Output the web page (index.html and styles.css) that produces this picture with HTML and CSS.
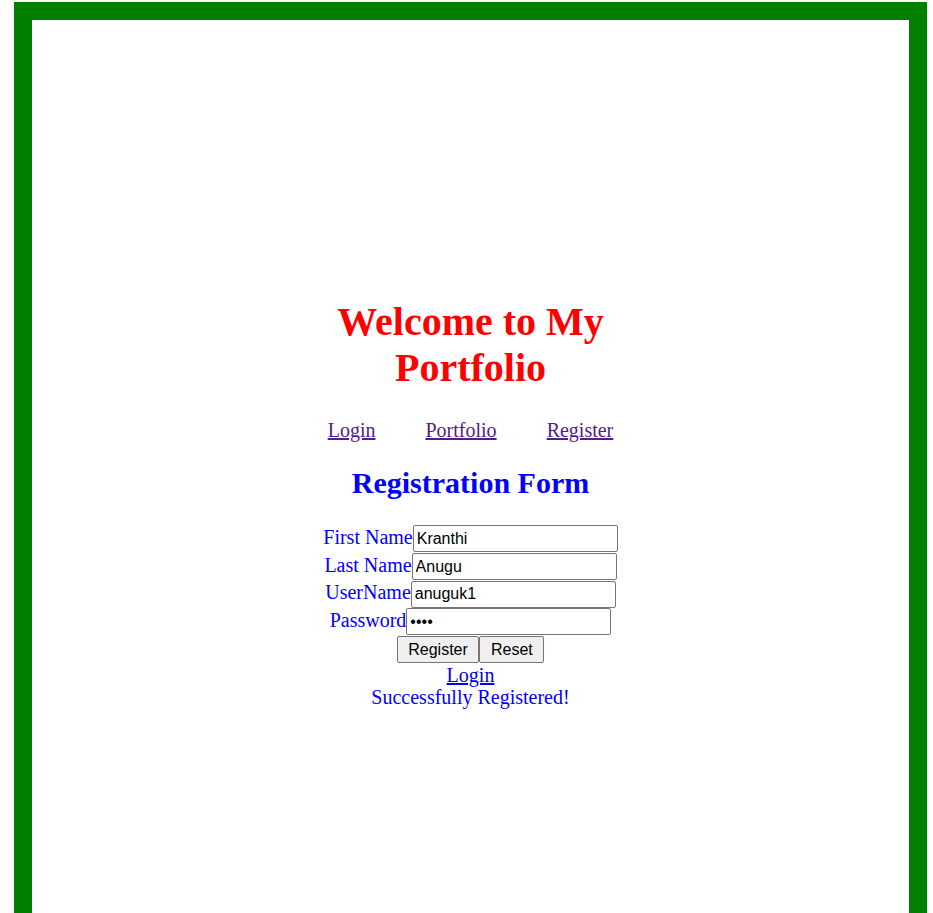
FILE: index.html
```html
<!DOCTYPE html>
<html lang="en">
<head>
<meta charset="utf-8">
<title>Registration Form</title>
<link rel="stylesheet" href="styles.css">
</head>
<body>
<div class="frame">
  <div class="column">
    <h1 class="title">Welcome to My Portfolio</h1>
    <nav class="nav">
      <a href="#" class="nav-link">Login</a>
      <a href="#" class="nav-link">Portfolio</a>
      <a href="#" class="nav-link">Register</a>
    </nav>
    <h2 class="form-title">Registration Form</h2>
    <form class="form">
      <div class="row"><label class="label">First Name</label><input class="field" type="text" value="Kranthi"></div>
      <div class="row"><label class="label">Last Name</label><input class="field" type="text" value="Anugu"></div>
      <div class="row"><label class="label">UserName</label><input class="field" type="text" value="anuguk1"></div>
      <div class="row"><label class="label">Password</label><input class="field" type="password" value="1234"></div>
      <div class="buttons"><button type="button" class="btn">Register</button><button type="button" class="btn">Reset</button></div>
    </form>
    <div class="login-line"><a href="#" class="login-link">Login</a></div>
    <div class="message">Successfully Registered!</div>
  </div>
</div>
</body>
</html>
```

FILE: styles.css
```css
html, body {
  margin: 0;
  padding: 0;
  overflow: hidden;
  background: #ffffff;
}

.frame {
  margin: 2px 0 0 14px;
  width: 913px;
  height: 911px;
  box-sizing: border-box;
  border: 18px solid #008000;
  border-bottom-width: 0;
  display: flex;
  justify-content: center;
  padding-top: 279px;
}

.column {
  width: 300px;
  text-align: center;
  font-family: "Liberation Serif", "Times New Roman", serif;
}

.title {
  margin: 0 0 28.4px;
  font-size: 40px;
  line-height: 46px;
  font-weight: bold;
  color: #ff0000;
}

.nav {
  display: flex;
  justify-content: center;
  gap: 50px;
  font-size: 20px;
  line-height: 23px;
  margin-bottom: 23.2px;
}

.nav-link {
  color: #551a8b;
  text-decoration: underline;
}

.form-title {
  margin: 0 0 25.4px;
  font-size: 30px;
  line-height: 34.5px;
  font-weight: bold;
  color: #0000ff;
}

.form {
  margin: 0;
}

.row {
  display: flex;
  justify-content: center;
  align-items: baseline;
  height: 27.67px;
}

.label {
  font-size: 20px;
  line-height: 23px;
  color: #0000ff;
  white-space: nowrap;
}

.field {
  width: 205px;
  height: 27px;
  box-sizing: border-box;
  margin: 0;
  padding: 0 3px;
  border: 1px solid #767676;
  border-radius: 2px;
  font-family: "Liberation Sans", Arial, sans-serif;
  font-size: 16px;
  color: #000000;
  background: #ffffff;
}

.buttons {
  display: flex;
  justify-content: center;
  height: 27px;
}

.btn {
  height: 27px;
  box-sizing: border-box;
  margin: 0;
  padding: 0 10.6px;
  border: 1px solid #767676;
  border-radius: 2px;
  background: #efefef;
  font-family: "Liberation Sans", Arial, sans-serif;
  font-size: 16px;
  color: #000000;
}

.login-line {
  font-size: 20px;
  line-height: 23px;
  margin-top: 0.75px;
}

.login-link {
  color: #0000ee;
  text-decoration: underline;
}

.message {
  font-size: 20px;
  line-height: 20px;
  color: #0000ff;
}
```
